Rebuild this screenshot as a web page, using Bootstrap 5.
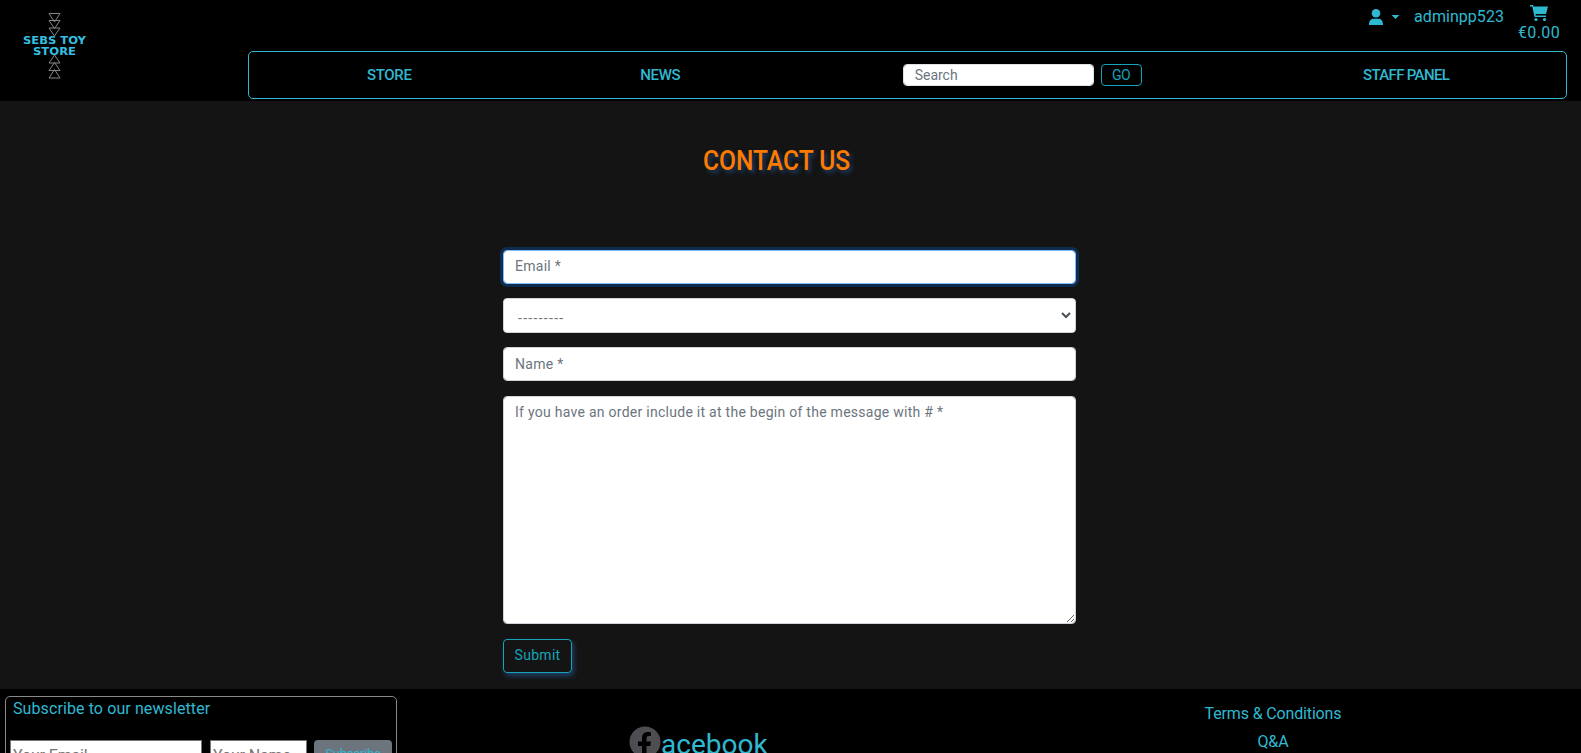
<!DOCTYPE html>
<html lang="en">
<head>
<meta charset="utf-8">
<meta name="viewport" content="width=device-width, initial-scale=1">
<title>Sebs Toy Store - Contact</title>
<link href="https://cdn.jsdelivr.net/npm/bootstrap@5.3.0/dist/css/bootstrap.min.css" rel="stylesheet">
<style>
body{font-family:Roboto,"Open Sans",sans-serif;background:#141414;color:#2fb9d1;height:753px;overflow:hidden;font-size:16px}
a{color:inherit;text-decoration:none;white-space:nowrap}
.site-head{height:101px;background:#000}
.brand-logo{width:248px;flex:none}
.top-links{height:51px;padding-right:7px}
.user-menu{margin:9px 14px 0 0}
.user-name{margin:5px 14px 0 0;letter-spacing:.05px}
.basket-link{line-height:20px;width:42px}
.basket-link span{letter-spacing:.4px}
.main-menu{height:48px;width:1319px;border:1px solid #2fb9d1;border-radius:5px;padding-left:118px;padding-right:118px;font-size:15px;font-weight:500;letter-spacing:-.35px}
.search-box{width:191px;height:22px;min-height:0;padding:0 11px;font-size:14px;letter-spacing:0;border-radius:4px}
.form-control::placeholder{color:#6c757d}
.go-btn{width:41px;height:22px;font-size:14px;letter-spacing:-.4px;border:1px solid #17a2b8;border-radius:4px;color:#17a2b8;padding:0;line-height:20px;background:none}
.page-title{font-size:28px;font-weight:500;line-height:34px;color:#ff7b00;text-shadow:3px 3px 5px #1d3f66;margin:43px 0 0 703px;width:168px;white-space:nowrap;transform:scaleX(.877);transform-origin:left}
.contact-form{width:573px;margin:72px 0 0 503px}
.contact-form .form-control,.contact-form .form-select{font-size:14px;letter-spacing:.27px;padding:0 11px;border-radius:4px;border:1px solid #ced4da;color:#6c757d;height:34px;min-height:0;background-color:#fff}
.contact-form .email-box{border-color:#80bdff;box-shadow:0 0 0 3px #0e2d4e;padding-bottom:2px}
.contact-form .form-select{height:35px;padding-left:14px;padding-top:5px;letter-spacing:1.3px;background-image:url("data:image/svg+xml,%3csvg xmlns='http://www.w3.org/2000/svg' viewBox='0 0 10 7'%3e%3cpath d='M1 1l4 4 4-4' fill='none' stroke='%23495057' stroke-width='2'/%3e%3c/svg%3e");background-position:right 4px center;background-size:10px 7px}
.contact-form .message-box{height:228px;padding-top:5px;resize:vertical}
.submit-btn{width:69px;height:34px;font-size:14px;letter-spacing:.3px;border:1px solid #17a2b8;border-radius:4px;color:#17a2b8;padding:0 0 1px;background:none;box-shadow:2px 3px 5px #1d3f66}
.site-foot{height:64px;margin-top:16px;background:#000;overflow:hidden}
.news-card{width:392px;height:110px;margin:7px 0 0 5px;border:1px solid #888;border-radius:5px;padding:0 4px}
.news-title{padding-left:3px;line-height:24px;height:43px;font-size:16px;letter-spacing:.1px}
.news-card input{height:30px;border:1px solid #767676;padding:0 2px;font-size:16px;letter-spacing:-.15px;background:#fff}
.news-card input::placeholder{color:#757575}
.sub-btn{width:78px;height:34px;background:#6c757d;color:#2fb9d1;border:0;border-radius:4px;font-size:13px;letter-spacing:-.2px;padding:0 0 6px}
.social{margin:37px 0 0 232px;width:140px;height:40px}
.fb-name{font-size:28px;line-height:38px;font-weight:400}
.info-links{width:200px;margin-left:404px;padding-top:11px;line-height:28px}
.info-links a{letter-spacing:-.15px}
</style>
</head>
<body>
<header class="site-head d-flex">
  <a href="#" class="brand-logo">
    <svg width="110" height="100" viewBox="0 0 110 100">
      <g fill="none" stroke="#858585" stroke-width="1">
        <path d="M49 13.500H60L54.500 22ZM49 20.500H60L54.500 28.500ZM49 28H60L54.500 36ZM49 63H60L54.500 55ZM49 70.500H60L54.500 62.500ZM49 78H60L54.500 69.500Z"/>
      </g>
      <g fill="#36bfe0" font-family="DejaVu Sans" font-weight="bold" font-size="11">
        <text x="23" y="44" textLength="63" lengthAdjust="spacingAndGlyphs">SEBS TOY</text>
        <text x="33" y="55" textLength="43" lengthAdjust="spacingAndGlyphs">STORE</text>
      </g>
    </svg>
  </a>
  <div>
    <div class="top-links d-flex justify-content-end">
      <a href="#" class="user-menu d-flex">
        <svg width="32" height="17" viewBox="0 0 32 17" fill="#2fb9d1"><circle cx="8" cy="4.300" r="4.300"/><path d="M1 16C1 11.500 3 9.800 6 9.800H10C13 9.800 15 11.500 15 16ZM23.500 6H31.500L27.500 10Z"/></svg>
      </a>
      <a href="#" class="user-name">adminpp523</a>
      <a href="#" class="basket-link d-flex flex-column align-items-center">
        <svg width="20" height="17" viewBox="0 0 20 17" style="margin:5px 0 1px" fill="#2fb9d1"><path d="M1 0H4L4.500 1.500H19L17 9H6.500L6.800 10.500H17V12H5.500L3.300 1.500H1Z"/><circle cx="7" cy="14.500" r="1.600"/><circle cx="15.500" cy="14.500" r="1.600"/></svg>
        <span>€0.00</span>
      </a>
    </div>
    <nav class="main-menu d-flex align-items-center justify-content-between">
      <a href="#" style="width:52px">STORE</a>
      <a href="#" style="width:41px">NEWS</a>
      <form class="d-flex" style="gap:7px"><input class="form-control search-box" placeholder="Search"><button type="button" class="go-btn">GO</button></form>
      <a href="#" style="width:85px;letter-spacing:-.65px">STAFF PANEL</a>
    </nav>
  </div>
</header>
<main>
  <h1 class="page-title">CONTACT US</h1>
  <form class="contact-form d-flex flex-column">
    <input class="form-control email-box" placeholder="Email *">
    <select class="form-select" style="margin-top:14px"><option>---------</option></select>
    <input class="form-control" style="margin-top:14px" placeholder="Name *">
    <textarea class="form-control message-box" style="margin-top:15px" placeholder="If you have an order include it at the begin of the message with # *"></textarea>
    <button type="button" class="submit-btn" style="margin-top:15px">Submit</button>
  </form>
</main>
<footer class="site-foot d-flex">
  <section class="news-card flex-shrink-0">
    <div class="news-title">Subscribe to our newsletter</div>
    <form class="d-flex"><input style="width:192px" placeholder="Your Email"><input style="width:97px;margin:0 7px 0 8px" placeholder="Your Name"><button type="button" class="sub-btn">Subscribe</button></form>
  </section>
  <a href="#" class="social d-flex flex-shrink-0">
    <svg width="32" height="32" viewBox="0 0 32 32"><circle cx="16" cy="16" r="15.500" fill="#4d4d52"/><path d="M13 32V20H9V15.500H13V12C13 8 15.500 6 19 6C20.500 6 22 6.300 22 6.300V10H20C18 10 17.500 11.200 17.500 12.500V15.500H22L21.300 20H17.500V32Z" fill="#000"/></svg>
    <span class="fb-name">acebook</span>
  </a>
  <div class="info-links d-flex flex-column align-items-center"><a href="#">Terms &amp; Conditions</a><a href="#">Q&amp;A</a></div>
</footer>
<script src="https://cdn.jsdelivr.net/npm/bootstrap@5.3.0/dist/js/bootstrap.bundle.min.js"></script>
</body>
</html>
